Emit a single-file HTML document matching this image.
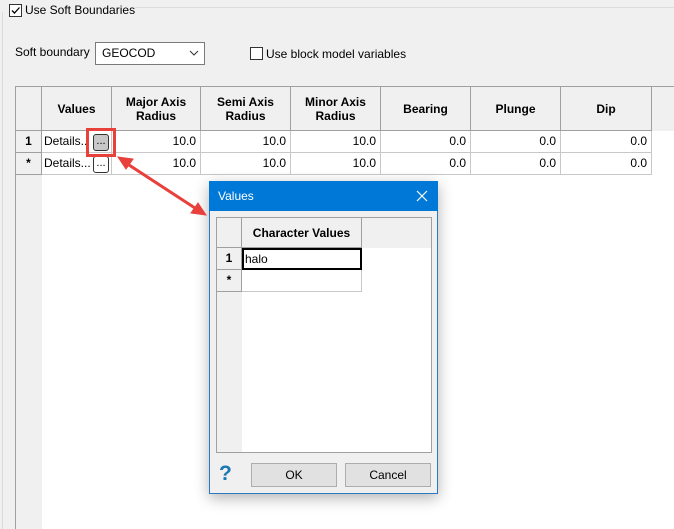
<!DOCTYPE html>
<html><head><style>
*{margin:0;padding:0;box-sizing:border-box}
body{width:674px;height:529px;background:#f0f0f0;font-family:"Liberation Sans",Arial,sans-serif;font-size:12px;color:#000;position:relative;overflow:hidden}
.a{position:absolute}
.hl{background:#dcdcdc}
.th{position:absolute;display:flex;align-items:center;justify-content:center;text-align:center;font-weight:bold;line-height:14px;border-right:1px solid #a0a0a0;border-bottom:1px solid #a0a0a0;background:#f0f0f0}
.td{position:absolute;border-right:1px solid #c8c8c8;border-bottom:1px solid #c8c8c8;background:#fff;text-align:right;padding-right:4px;line-height:21px}
.rh{position:absolute;background:#f0f0f0;border-right:1px solid #a0a0a0;border-bottom:1px solid #a0a0a0;text-align:center;font-weight:bold;line-height:21px}
.btn{position:absolute;width:16px;height:17px;border:1px solid #333;border-radius:3px;background:#fff;font-size:11px;text-align:center;line-height:12px}
</style></head><body>
<!-- group box -->
<div class="a" style="left:135px;top:7px;width:539px;height:1px;background:#dcdcdc"></div>
<div class="a" style="left:2px;top:12px;width:1px;height:517px;background:#dcdcdc"></div>
<div class="a" style="left:9px;top:4px;width:13px;height:13px;border:1px solid #333;background:#fff"></div>
<svg class="a" style="left:10px;top:5px" width="11" height="11"><path d="M2 5.5 L4.5 8 L9.5 2.5" stroke="#000" stroke-width="1.3" fill="none"/></svg>
<div class="a" style="left:25px;top:3px;font-size:12px">Use Soft Boundaries</div>
<div class="a" style="left:15px;top:45px">Soft boundary</div>
<div class="a" style="left:95px;top:42px;width:110px;height:23px;border:1px solid #7a7a7a;background:#fff;padding-left:6px;line-height:21px">GEOCOD</div>
<svg class="a" style="left:189px;top:49px" width="10" height="8"><path d="M1 2 L5 6 L9 2" stroke="#333" fill="none"/></svg>
<div class="a" style="left:250px;top:47px;width:13px;height:13px;border:1px solid #333;background:#fff"></div>
<div class="a" style="left:266px;top:47px">Use block model variables</div>
<!-- grid -->
<div class="a" style="left:15px;top:86px;width:659px;height:443px;border:1px solid #a0a0a0;border-right:none;border-bottom:none;background:#fff"></div>
<div class="a" style="left:16px;top:87px;width:658px;height:44px;background:#f0f0f0"></div>
<div class="a" style="left:16px;top:87px;width:26px;height:442px;background:#f0f0f0"></div>
<div class="th" style="left:16px;top:87px;width:26px;height:44px"></div>
<div class="th" style="left:42px;top:87px;width:70px;height:44px">Values</div>
<div class="th" style="left:112px;top:87px;width:89px;height:44px">Major Axis<br>Radius</div>
<div class="th" style="left:201px;top:87px;width:90px;height:44px">Semi Axis<br>Radius</div>
<div class="th" style="left:291px;top:87px;width:90px;height:44px">Minor Axis<br>Radius</div>
<div class="th" style="left:381px;top:87px;width:90px;height:44px">Bearing</div>
<div class="th" style="left:471px;top:87px;width:90px;height:44px">Plunge</div>
<div class="th" style="left:561px;top:87px;width:91px;height:44px">Dip</div>
<div class="rh" style="left:16px;top:131px;width:26px;height:22px">1</div>
<div class="rh" style="left:16px;top:153px;width:26px;height:22px">*</div>
<div class="td" style="left:42px;top:131px;width:70px;height:22px;text-align:left;padding-left:2px">Details..</div>
<div class="td" style="left:42px;top:153px;width:70px;height:22px;text-align:left;padding-left:2px">Details...</div>
<div class="btn" style="left:93px;top:134px;background:#c8c8c8">...</div>
<div class="btn" style="left:93px;top:156px">...</div>
<div class="td" style="left:112px;top:131px;width:89px;height:22px">10.0</div>
<div class="td" style="left:201px;top:131px;width:90px;height:22px">10.0</div>
<div class="td" style="left:291px;top:131px;width:90px;height:22px">10.0</div>
<div class="td" style="left:381px;top:131px;width:90px;height:22px">0.0</div>
<div class="td" style="left:471px;top:131px;width:90px;height:22px">0.0</div>
<div class="td" style="left:561px;top:131px;width:91px;height:22px">0.0</div>
<div class="td" style="left:112px;top:153px;width:89px;height:22px">10.0</div>
<div class="td" style="left:201px;top:153px;width:90px;height:22px">10.0</div>
<div class="td" style="left:291px;top:153px;width:90px;height:22px">10.0</div>
<div class="td" style="left:381px;top:153px;width:90px;height:22px">0.0</div>
<div class="td" style="left:471px;top:153px;width:90px;height:22px">0.0</div>
<div class="td" style="left:561px;top:153px;width:91px;height:22px">0.0</div>
<div class="a" style="left:86px;top:128px;width:30px;height:29px;border:3px solid #e8413c"></div>
<!-- dialog -->
<div class="a" style="left:209px;top:181px;width:229px;height:313px;background:#f0f0f0;border:1px solid #2b79c2;box-shadow:0 4px 14px rgba(0,0,0,.3)"></div>
<div class="a" style="left:209px;top:181px;width:229px;height:30px;background:#0078d7;color:#fff;padding-left:9px;line-height:30px">Values</div>
<svg class="a" style="left:416px;top:190px" width="12" height="12"><path d="M1 1 L11 11 M11 1 L1 11" stroke="#fff" stroke-width="1.2"/></svg>
<div class="a" style="left:216px;top:217px;width:216px;height:236px;border:1px solid #a0a0a0;background:#fff"></div>
<div class="a" style="left:217px;top:218px;width:214px;height:30px;background:#f0f0f0"></div>
<div class="a" style="left:217px;top:218px;width:25px;height:234px;background:#f0f0f0"></div>
<div class="th" style="left:217px;top:218px;width:25px;height:30px"></div>
<div class="th" style="left:242px;top:218px;width:120px;height:30px">Character Values</div>
<div class="rh" style="left:217px;top:248px;width:25px;height:22px">1</div>
<div class="rh" style="left:217px;top:270px;width:25px;height:22px">*</div>
<div class="a" style="left:242px;top:248px;width:120px;height:22px;border:2px solid #000;background:#fff;padding-left:1px;line-height:18px">halo</div>
<div class="td" style="left:242px;top:270px;width:120px;height:22px"></div>
<div class="a" style="left:219px;top:462px;font-size:21px;font-weight:bold;color:#1a78b4">?</div>
<div class="a hl" style="left:251px;top:463px;width:86px;height:24px;border:1px solid #adadad;text-align:center;line-height:22px;background:#e1e1e1">OK</div>
<div class="a hl" style="left:345px;top:463px;width:86px;height:24px;border:1px solid #adadad;text-align:center;line-height:22px;background:#e1e1e1">Cancel</div>
<!-- arrow -->
<svg class="a" style="left:0;top:0" width="674" height="529"><g stroke="#e8413c" stroke-width="3" fill="#e8413c"><line x1="126" y1="163" x2="198" y2="210"/><path d="M118 157 L133 159 L126 169 Z" stroke-width="1"/><path d="M206 215 L191 213 L198 203 Z" stroke-width="1"/></g></svg>
</body></html>
